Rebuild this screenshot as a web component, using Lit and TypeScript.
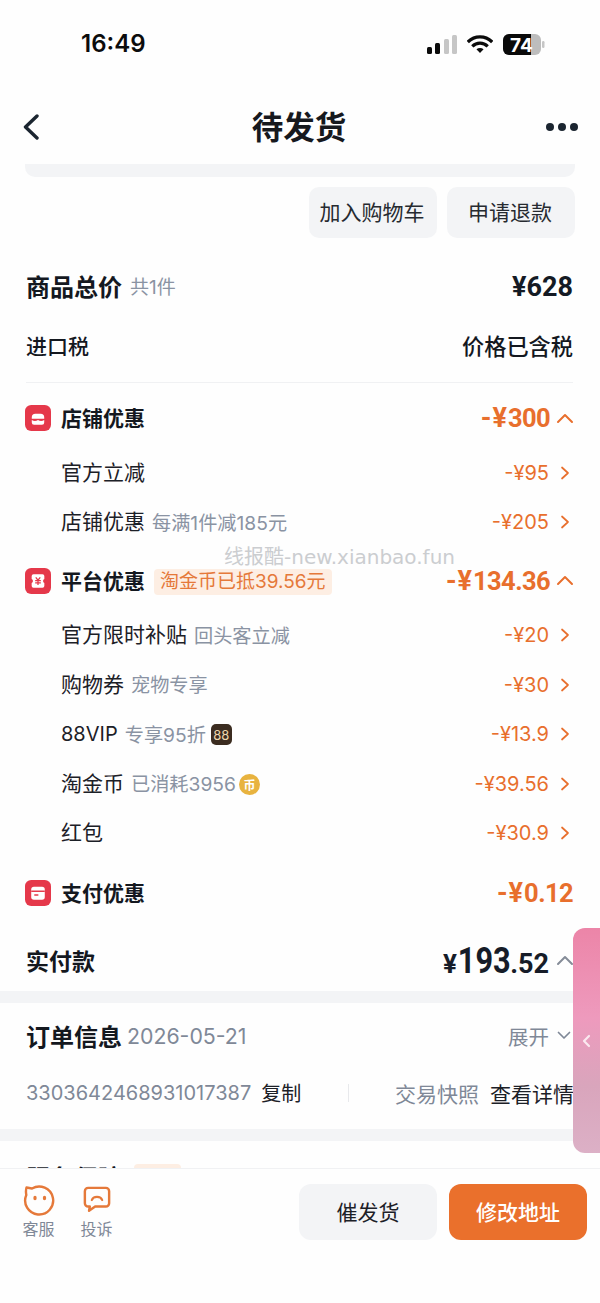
import { LitElement, html, css, svg } from "lit";
import { customElement } from "lit/decorators.js";

const chevRight = html`<svg class="chev" width="10" height="14" viewBox="0 0 10 14"><path d="M2 1.500 8 7l-6 5.500" fill="none" stroke="currentColor" stroke-width="1.700" stroke-linecap="round" stroke-linejoin="round"/></svg>`;
const chevUp = html`<svg class="up" width="18" height="11" viewBox="0 0 18 11"><path d="M2 9l7-7 7 7" fill="none" stroke="currentColor" stroke-width="2" stroke-linecap="round" stroke-linejoin="round"/></svg>`;

const shop = svg`<path d="M6 12.200v-1.200a3.200 3.200 0 0 1 3.200-3.200h4.600a3.200 3.200 0 0 1 3.200 3.200v1.200z" fill="#fff"/><path d="M6 13.300c1.800 1 3.700 1 5.500 0 1.800 1 3.700 1 5.500 0v2.200a2 2 0 0 1-2 2H8a2 2 0 0 1-2-2z" fill="#fff"/>`;
const ticket = svg`<path d="M7.500 5.500h8a1.600 1.600 0 0 1 1.600 1.600v2.600a2 2 0 0 0 0 3.600v2.600a1.600 1.600 0 0 1-1.600 1.600h-8a1.600 1.600 0 0 1-1.600-1.600v-2.600a2 2 0 0 0 0-3.600V7.100a1.600 1.600 0 0 1 1.600-1.600z" fill="#fff"/><path d="M9.500 8.200l2 2.600 2-2.600M9 11.200h5M9 13.200h5M11.500 10.800v4.200" fill="none" stroke="#e5384a" stroke-width="1.100"/>`;
const card = svg`<rect x="5.500" y="6" width="12" height="11.500" rx="2.400" fill="#fff"/><rect x="5.500" y="9.300" width="12" height="1.300" fill="#e5384a"/><rect x="8" y="12.600" width="4" height="1.400" rx=".7" fill="#e5384a"/>`;
const badge = (g: unknown) => html`<svg class="badge" width="26" height="26" viewBox="0 0 23 23"><rect width="23" height="23" rx="5.500" fill="#e5384a"/>${g}</svg>`;
const money = (s: string) => html`<span class="pre">-¥</span><span class="dig">${s}</span>`;

@customElement("app-root")
export class AppRoot extends LitElement {
  static styles = css`
    :host { display: block; width: 600px; height: 1303px; position: relative; overflow: hidden; background: #fefefe; color: #14181f;
      font-family: Inter, "Noto Sans CJK SC", sans-serif; }
    * { box-sizing: border-box; }
    .page { height: 1303px; display: flex; flex-direction: column; }
    .status { height: 88px; flex: none; display: flex; align-items: center; justify-content: space-between; padding: 0 55px 0 81px; }
    .time { font-size: 24px; font-weight: 600; color: #0c0c0c; line-height: 1; }
    .sys { display: flex; align-items: center; gap: 10px; }
    .nav { height: 76px; flex: none; display: flex; align-items: center; justify-content: space-between; padding: 2px 22px 0 22px; position: relative; }
    .nav h1 { position: absolute; inset: 0; margin: 0; display: flex; align-items: center; justify-content: center; padding: 0 2px 2px 0; font-size: 31.500px; font-weight: 700; color: #16191e; }
    .dots { display: flex; gap: 4px; }
    .dots i { width: 8px; height: 8px; border-radius: 50%; background: #1b2530; }
    .scroll { flex: 1; min-height: 0; overflow: hidden; }
    .strip { height: 13px; margin: 0 25px; background: #f3f4f6; border-radius: 0 0 10px 10px; }
    .actions { display: flex; justify-content: flex-end; gap: 10px; padding: 10px 25px 0; }
    .actions button { width: 128px; height: 51px; border: 0; border-radius: 10px; background: #f3f4f6; font: inherit; font-size: 21px; color: #262a30; padding: 0 2px 3px 0; }
    .row { display: flex; align-items: center; justify-content: space-between; padding: 0 26px; }
    .l { display: flex; align-items: center; min-width: 0; }
    .num { font-family: Roboto, Inter, sans-serif; font-weight: 700; }
    .total { height: 60px; margin-top: 19px; padding-right: 27px; }
    .total .t { font-size: 24px; font-weight: 700; padding-bottom: 4px; }
    .total .s { font-size: 19px; color: #8a93a3; margin-left: 8px; padding-bottom: 4px; }
    .total .v { font-size: 27px; color: #141a24; }
    .tax { height: 66px; border-bottom: 1px solid #f0f1f3; margin: 0 27px 0 26px; padding: 0 0 9px; font-size: 21px; font-weight: 500; }
    .tax .w { font-size: 22.200px; }
    .head { height: 54px; padding-left: 25px; margin-top: 8px; margin-bottom: 2px; }
    .head .t { font-size: 21px; font-weight: 700; margin-left: 10px; padding-bottom: 2px; }
    .last { margin-top: 9px; margin-bottom: 0; padding-right: 27px; }
    .badge { flex: none; }
    .amount { display: flex; align-items: baseline; color: #e86f2d; }
    .pre { font-size: 27px; letter-spacing: 1px; }
    .dig { font-size: 25.500px; letter-spacing: -.6px; }
    .up { color: #e86f2d; margin-left: 6px; margin-right: 0; align-self: center; }
    .item { height: 49.400px; padding-left: 61px; font-size: 21px; color: #1c2027; }
    .item .l { padding-bottom: 2px; }
    .latin { font-size: 20px; padding-top: 4px; }
    .sub { color: #8a93a3; font-size: 19.200px; margin-left: 7px; padding-top: 3px; }
    .amt { display: flex; align-items: center; gap: 11px; color: #e86f2d; font-size: 20px; padding-top: 2px; }
    .chev { color: #e86f2d; margin-right: 4px; }
    .tag { background: #fdeee3; color: #e5793a; font-size: 19px; padding: 0 6px; margin: 2px 0 0 9px; border-radius: 4px; line-height: 26px; height: 26px; }
    .mark { width: 21px; height: 21px; margin: 5px 0 0 5px; border-radius: 5px; background: #3b2c20; color: #eed6ad; font-size: 13px; display: flex; align-items: center; justify-content: center; }
    .coin { border-radius: 50%; background: #e8b33f; color: #fff; font-size: 12px; font-weight: 700; margin-left: 3px; }
    .paid { height: 71px; padding-top: 10px; }
    .paid .t { font-size: 23px; font-weight: 700; }
    .paid .v { display: flex; align-items: baseline; font-weight: 700; color: #161c28; }
    .yen { font-size: 26px; font-family: Roboto, sans-serif; }
    .big { font-size: 37px; font-family: Roboto, sans-serif; display: inline-block; transform: scaleX(.83); transform-origin: right; margin-left: -10.500px; }
    .small { font-size: 27px; font-family: Roboto, sans-serif; }
    .paid .up { color: #858c98; margin: 0 0 0 7px; }
    .band { height: 12px; background: #f3f4f6; }
    .info { height: 68px; padding-bottom: 2px; }
    .info .t { font-size: 24px; font-weight: 700; }
    .info .d { font-size: 21.300px; color: #7f8897; margin-left: 5px; }
    .open { display: flex; align-items: center; gap: 8px; font-size: 20.500px; color: #7f8897; }
    .open svg { margin-right: 3px; }
    .order { height: 44px; padding-right: 26px; font-size: 20px; color: #7f8897; margin-bottom: 14px; }
    .order .copy { color: #1c2027; margin-left: 10px; }
    .order .sep { width: 1px; height: 18px; background: #e8e9ec; margin-right: 46px; }
    .order .r { display: flex; align-items: center; font-size: 21px; }
    .order .see { color: #1c2027; margin-left: 11px; white-space: nowrap; }
    .service { height: 72px; padding-right: 46px; }
    .service .t { font-size: 24px; font-weight: 700; }
    .pill { width: 47px; height: 26px; margin-left: 12px; border-radius: 4px; background: #fdeee3; }
    .more { color: #e86f2d; font-size: 21px; }
    .bottom { height: 135px; flex: none; border-top: 1px solid #f0f1f3; background: #fefefe; display: flex; justify-content: space-between; padding: 15px 13px 0 23px; }
    .tools { display: flex; gap: 27px; }
    .tool { width: 31px; display: flex; flex-direction: column; align-items: center; font-size: 16px; color: #7f8897; line-height: 20px; white-space: nowrap; }
    .ico { height: 32px; flex: none; margin-bottom: 3px; display: flex; align-items: center; justify-content: center; }
    .btns { display: flex; gap: 12px; }
    .btns button { width: 138px; height: 56px; border: 0; border-radius: 12px; font: inherit; font-size: 21px; padding: 0 0 2px; background: #f3f4f6; color: #1c2027; }
    .btns .primary { background: #ea702c; color: #fff; font-weight: 500; }
    .tab { position: absolute; left: 573px; top: 928px; width: 27px; height: 225px; border-radius: 12px 0 0 12px; background: linear-gradient(180deg,#ec85a8 0%,#ee9abd 40%,#d9a5bc 70%,#dcb0c6 100%); display: flex; align-items: center; padding-left: 8px; }
    .mark-text { position: absolute; left: 224px; top: 544px; font-family: "DejaVu Sans", "Noto Sans CJK SC", sans-serif; font-size: 20px; color: #cbcdd0; white-space: nowrap; line-height: 26px; }
  `;

  item(label: unknown, sub: unknown, amt: string) {
    return html`<div class="row item"><div class="l">${label}${sub}</div><div class="amt">${amt}${chevRight}</div></div>`;
  }

  render() {
    const sub = (s: string) => html`<span class="sub">${s}</span>`;
    return html`<div class="page">
      <div class="status">
        <span class="time">16:49</span>
        <div class="sys">
          <svg width="30" height="19" viewBox="0 0 30 19"><rect x="0" y="12" width="5" height="7" rx="1.500" fill="#0b0b0b"/><rect x="8" y="8" width="5" height="11" rx="1.500" fill="#0b0b0b"/><rect x="17" y="4" width="5" height="15" rx="1.500" fill="#c6c6c6"/><rect x="25" y="0" width="5" height="19" rx="1.500" fill="#c6c6c6"/></svg>
          <svg width="26" height="20" viewBox="0 0 27 20"><path d="M.8 8C7.800 .8 19.200 .8 26.200 8M5.500 12.400c4.500-4.300 11.500-4.300 16 0" fill="none" stroke="#0b0b0b" stroke-width="3.400"/><path d="M9.800 15.400c2.200-1.800 5.200-1.800 7.400 0l-3.700 4z" fill="#0b0b0b"/></svg>
          <svg width="42" height="21" viewBox="0 0 42 21"><rect x="0" y="0" width="38" height="21" rx="6" fill="#bdbdbd"/><path d="M6 0h22v21H6a6 6 0 0 1-6-6V6a6 6 0 0 1 6-6z" fill="#0a0a0a"/><rect x="39" y="7" width="2.500" height="7" rx="1.200" fill="#c6c6c6"/><text x="7" y="17.500" font-family="Inter" font-size="19" font-weight="700" fill="#fff">74</text></svg>
        </div>
      </div>
      <div class="nav">
        <svg width="18" height="26" viewBox="0 0 18 26"><path d="M15 2 3.500 13 15 24" fill="none" stroke="#1b2530" stroke-width="3.400" stroke-linecap="round" stroke-linejoin="round"/></svg>
        <h1>待发货</h1>
        <div class="dots"><i></i><i></i><i></i></div>
      </div>
      <div class="scroll">
        <div class="strip"></div>
        <div class="actions"><button>加入购物车</button><button>申请退款</button></div>
        <div class="row total"><div class="l"><span class="t">商品总价</span><span class="s">共1件</span></div><span class="v num">¥628</span></div>
        <div class="row tax"><span>进口税</span><span class="w">价格已含税</span></div>
        <div class="row head"><div class="l">${badge(shop)}<span class="t">店铺优惠</span></div><div class="amount num">${money("300")}${chevUp}</div></div>
        ${this.item("官方立减", "", "-¥95")}
        ${this.item("店铺优惠", sub("每满1件减185元"), "-¥205")}
        <div class="row head"><div class="l">${badge(ticket)}<span class="t">平台优惠</span><span class="tag">淘金币已抵39.56元</span></div><div class="amount num">${money("134.36")}${chevUp}</div></div>
        ${this.item("官方限时补贴", sub("回头客立减"), "-¥20")}
        ${this.item("购物券", sub("宠物专享"), "-¥30")}
        ${this.item(html`<span class="latin">88VIP</span>`, html`${sub("专享95折")}<span class="mark">88</span>`, "-¥13.9")}
        ${this.item("淘金币", html`${sub("已消耗3956")}<span class="mark coin">币</span>`, "-¥39.56")}
        ${this.item("红包", "", "-¥30.9")}
        <div class="row head last"><div class="l">${badge(card)}<span class="t">支付优惠</span></div><div class="amount num">${money("0.12")}</div></div>
        <div class="row paid"><span class="t">实付款</span><div class="v"><span class="yen">¥</span><span class="big">193</span><span class="small">.52</span>${chevUp}</div></div>
        <div class="band"></div>
        <div class="row info"><div class="l"><span class="t">订单信息</span><span class="d">2026-05-21</span></div><div class="open">展开<svg width="14" height="9" viewBox="0 0 14 9"><path d="M1.500 1.500 7 7l5.500-5.500" fill="none" stroke="currentColor" stroke-width="1.700" stroke-linecap="round" stroke-linejoin="round"/></svg></div></div>
        <div class="row order"><div class="l"><span>3303642468931017387</span><span class="copy">复制</span></div><div class="r"><span class="sep"></span><span>交易快照</span><span class="see">查看详情</span></div></div>
        <div class="band"></div>
        <div class="row service"><div class="l"><span class="t">服务保障</span><span class="pill"></span></div><span class="more">查看更多</span></div>
      </div>
      <div class="bottom">
        <div class="tools">
          <div class="tool"><div class="ico"><svg width="32" height="32" viewBox="0 0 32 32"><path d="M3.500 3.500 9 4.500A14 14 0 1 1 3.300 11Q2.500 7 3.500 3.500z" fill="none" stroke="#e5793a" stroke-width="2.400" stroke-linejoin="round"/><ellipse cx="12" cy="14" rx="1.700" ry="2.300" fill="#e5793a"/><ellipse cx="21.500" cy="14" rx="1.700" ry="2.300" fill="#e5793a"/></svg></div><span>客服</span></div>
          <div class="tool"><div class="ico"><svg width="28" height="28" viewBox="0 0 30 30"><path d="M5.500 2h19A3.500 3.500 0 0 1 28 5.500v13a3.500 3.500 0 0 1-3.500 3.500H13l-6.500 4.500.8-4.500H5.500A3.500 3.500 0 0 1 2 18.500v-13A3.500 3.500 0 0 1 5.500 2z" fill="none" stroke="#e5793a" stroke-width="2.600" stroke-linejoin="round"/><path d="M9.500 15c1.500-4.500 9.500-4.500 11 0" fill="none" stroke="#e5793a" stroke-width="2.400" stroke-linecap="round"/></svg></div><span>投诉</span></div>
        </div>
        <div class="btns"><button>催发货</button><button class="primary">修改地址</button></div>
      </div>
    </div>
    <div class="mark-text">线报酷-new.xianbao.fun</div>
    <div class="tab"><svg width="11" height="14" viewBox="0 0 11 14"><path d="M8 2 3 7l5 5" fill="none" stroke="#fbe9f0" stroke-width="2.200" stroke-linecap="round" stroke-linejoin="round"/></svg></div>`;
  }
}
